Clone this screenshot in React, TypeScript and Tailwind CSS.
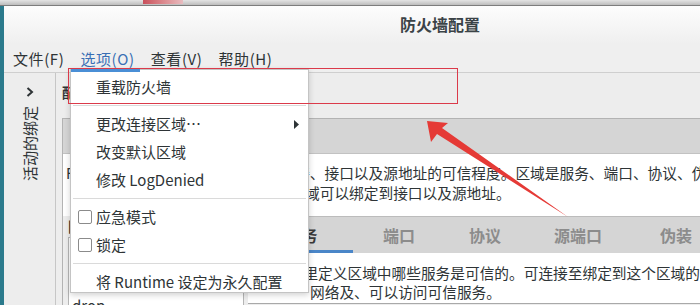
import React from 'react';

const tabs = [
  { label: '服务', w: 'w-[103px]', active: true },
  { label: '端口', w: 'w-[92px]', active: false },
  { label: '协议', w: 'w-[80px]', active: false },
  { label: '源端口', w: 'w-[106px]', active: false },
  { label: '伪装', w: 'w-[90px]', active: false },
];

const Separator = () => <div className="my-[4px] mx-[2px] h-px bg-[#dadada]" />;

const CheckItem: React.FC<{ label: string }> = ({ label }) => (
  <div className="h-[28px] flex items-center pl-[7px]">
    <span className="w-[14px] h-[14px] border border-[#8b8b8b] rounded-[2px] bg-white" />
    <span className="ml-[4px]">{label}</span>
  </div>
);

export default function App() {
  return (
    <div className="relative w-[700px] h-[305px] overflow-hidden bg-[#ededed] font-['Noto_Sans_CJK_SC','Noto_Sans',sans-serif] text-[#2e3436]">
      {/* desktop strip */}
      <div className="flex h-[6px] bg-gradient-to-b from-[#e4e4e4] to-[#bdbdbd] border-b border-[#7d7d7d]">
        <div className="ml-[143px] w-[40px] h-[4px] bg-gradient-to-r from-[#c9505c] to-[#e8bcc0]" />
      </div>

      <div className="flex h-[299px]">
        <div className="w-[4px] bg-[#2b7a8c]" />

        {/* window */}
        <div className="flex-1 flex flex-col min-w-0">
          <div className="h-[38px] bg-gradient-to-b from-[#fdfdfd] to-[#efefef] pl-[396px] pt-[7px] text-[16px] font-bold leading-[22px] text-[#3b4347]">
            防火墙配置
          </div>

          <div className="flex items-center h-[29px] border-b border-[#cfcfcf] bg-[#efefef] pl-[9px] pt-[2px] gap-[16px] text-[15px] leading-[20px] tracking-[0.6px]">
            <span>文件(F)</span>
            <span className="text-[#3a6fb5]">选项(O)</span>
            <span>查看(V)</span>
            <span>帮助(H)</span>
          </div>

          <div className="flex flex-1 min-h-0">
            {/* side bar */}
            <aside className="w-[52px] border-r border-[#c6c6c6] flex flex-col items-center pt-[14px]">
              <svg width="8" height="10" viewBox="0 0 8 10">
                <path d="M1.5 1 L6 5 L1.5 9" fill="none" stroke="#2e3436" strokeWidth="2" />
              </svg>
              <div className="mt-[9px] [writing-mode:vertical-rl] [text-orientation:sideways] rotate-180 text-[15px] leading-[20px]">
                活动的绑定
              </div>
            </aside>

            <main className="flex-1 flex flex-col pl-[6px] min-w-0">
              <div className="h-[45px] pt-[9px] text-[14px] font-bold leading-[20px]">配置：</div>

              <div className="flex-1 flex flex-col border-l border-t border-[#b3b3b3] min-h-0">
                <div className="h-[35px] bg-[#d5d5d5] border-b border-[#c2c2c2]" />

                <div className="h-[62px] bg-white pl-[3px] pt-[9px] text-[14.7px] leading-[20px] whitespace-nowrap overflow-hidden">
                  <div>FirewallD 区域定义了绑定的网络连接、接口以及源地址的可信程度。区域是服务、端口、协议、伪装、端口转发</div>
                  <div className="pl-[4px]">伪装、端口转发以及富规则组合。区域可以绑定到接口以及源地址。</div>
                </div>

                <div className="flex flex-1 min-h-0">
                  {/* zones */}
                  <div className="w-[181px] pl-[5px] pt-[2px]">
                    <div className="text-[14px] font-bold leading-[16px]">区域</div>
                    <div className="mt-[3px] h-[80px] bg-white border border-[#b5b5b5] pt-[3px] text-[15px]">
                      <div className="h-[26px] leading-[26px] pl-[3px]">block</div>
                      <div className="h-[26px] leading-[26px] pl-[3px]">dmz</div>
                      <div className="h-[26px] leading-[26px] pl-[3px]">drop</div>
                    </div>
                  </div>

                  {/* zone detail */}
                  <div className="flex-1 ml-[4px] flex flex-col min-w-0">
                    <div className="h-[37px] flex border-t border-[#bcbcbc] bg-[#d5d5d5] pl-[2px]">
                      {tabs.map((t) => (
                        <div
                          key={t.label}
                          className={`${t.w} shrink-0 flex items-center justify-center border-b-[3px] pt-[3px] text-[16px] font-bold ${
                            t.active ? 'border-[#4a86c8] text-[#3a3a3a]' : 'border-transparent text-[#8c8c8c]'
                          }`}
                        >
                          {t.label}
                        </div>
                      ))}
                    </div>
                    <div className="h-[51px] bg-white border-b border-[#a9a9a9] pt-[10px] text-[14.7px] leading-[19px] whitespace-nowrap overflow-hidden">
                      <div className="pl-[26px]">在这里定义区域中哪些服务是可信的。可连接至绑定到这个区域的连接、接口和源的所有主机和</div>
                      <div className="pl-[62px]">网络及、可以访问可信服务。</div>
                    </div>
                  </div>
                </div>
              </div>
            </main>
          </div>
        </div>
      </div>

      {/* 选项 menu */}
      <div className="absolute left-[70px] top-[69px] w-[239px] bg-white border border-[#c4c4c4] shadow-[0_2px_6px_rgba(0,0,0,0.18)] pt-[3px] text-[15px] text-[#2e3436]">
        <div className="absolute left-0 top-[-1px] w-[69px] h-[3px] bg-[#4a8fd6]" />
        <div className="h-[28px] flex items-center pl-[25px]">重载防火墙</div>
        <Separator />
        <div className="h-[28px] flex items-center pl-[25px]">
          <span>更改连接区域…</span>
          <svg className="ml-auto mr-[9px]" width="5" height="9" viewBox="0 0 5 9">
            <path d="M0 0 L5 4.5 L0 9Z" fill="#2e3436" />
          </svg>
        </div>
        <div className="h-[28px] flex items-center pl-[25px]">改变默认区域</div>
        <div className="h-[28px] flex items-center pl-[25px]">修改 LogDenied</div>
        <Separator />
        <CheckItem label="应急模式" />
        <CheckItem label="锁定" />
        <Separator />
        <div className="h-[24px] flex items-center pl-[25px] pt-[4px]">将 Runtime 设定为永久配置</div>
      </div>

      {/* annotation */}
      <div className="absolute left-[68px] top-[68px] w-[390px] h-[36px] border-[1.5px] border-[#db3a4a]" />
      <svg className="absolute left-0 top-0 pointer-events-none" width="700" height="305" viewBox="0 0 700 305">
        <polygon points="427,121 448,123 442,128 568,217 437,134 431,142" fill="#e53a36" />
      </svg>
    </div>
  );
}
